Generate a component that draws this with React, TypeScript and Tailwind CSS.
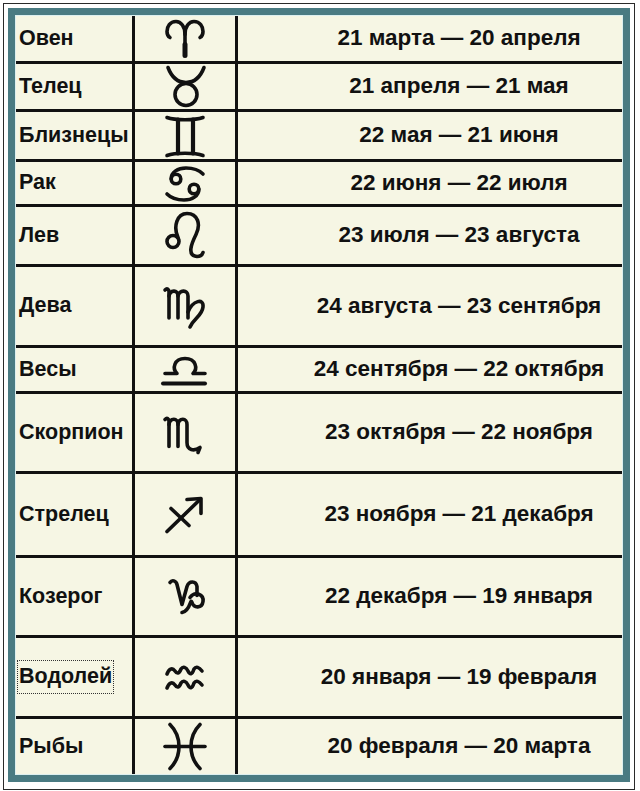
import React from "react";

type Row = { name: string; dates: string; c: number; sym: React.ReactNode; focus?: boolean };

const S = { fill: "none", stroke: "#111", strokeWidth: 3.6, strokeLinecap: "round" as const, strokeLinejoin: "round" as const };

const rows: Row[] = [
  {
    name: "Овен", dates: "21 марта — 20 апреля", c: 38.5,
    sym: (
      <>
        <path {...S} d="M185 55 L185 34 C185 26 181 21 176 21 C170 21 167 26 167 31 C167 34 168 36 170 37" />
        <path {...S} d="M185 34 C185 26 189 21 194 21 C200 21 203 26 203 31 C203 34 202 36 200 37" />
        <path {...S} strokeWidth={5} d="M185 44 L185 55" />
      </>
    ),
  },
  {
    name: "Телец", dates: "21 апреля — 21 мая", c: 86.5,
    sym: (
      <>
        <circle {...S} cx={186} cy={94} r={11} />
        <path {...S} d="M168 67 C171 75 177 82 186 82 C195 82 201 75 204 67" />
      </>
    ),
  },
  {
    name: "Близнецы", dates: "22 мая — 21 июня", c: 135.5,
    sym: (
      <>
        <path {...S} d="M167 117 C175 120 195 120 203 117" />
        <path {...S} d="M167 155 C175 152 195 152 203 155" />
        <path {...S} strokeWidth={4.2} d="M178 119 L178 153 M193 119 L193 153" />
      </>
    ),
  },
  {
    name: "Рак", dates: "22 июня — 22 июля", c: 183,
    sym: (
      <>
        <circle {...S} cx={176} cy={179} r={4.8} />
        <path {...S} d="M171.2 179 C171 172 178 168 186 168 C193 168 199 170 203 174" />
        <circle {...S} cx={194} cy={189} r={4.8} />
        <path {...S} d="M198.8 189 C199 196 192 200 184 200 C177 200 171 198 167 194" />
      </>
    ),
  },
  {
    name: "Лев", dates: "23 июля — 23 августа", c: 235.5,
    sym: (
      <>
        <circle {...S} cx={173} cy={241} r={6} />
        <path {...S} d="M178 237 C173 226 177 213 187 213 C198 213 201 224 196 234 C191 244 187 255 197 256 C200 256 202 255 203 252" />
      </>
    ),
  },
  {
    name: "Дева", dates: "24 августа — 23 сентября", c: 306,
    sym: (
      <>
        <path {...S} d="M165 290 C167 288 169 289 169 292 L169 318" />
        <path {...S} d="M169 296 C170 290 178 289 178 296 L178 318" />
        <path {...S} d="M178 296 C179 290 188 289 188 296 L188 318" />
        <path {...S} d="M188 312 C193 300 204 298 203 307 C202 316 194 318 190 327" />
      </>
    ),
  },
  {
    name: "Весы", dates: "24 сентября — 22 октября", c: 369.5,
    sym: (
      <>
        <path {...S} d="M165 373 L177 373 C172 368 174 358 185 358 C196 358 198 368 193 373 L205 373" />
        <path {...S} strokeWidth={4} d="M163 383 L205 383" />
      </>
    ),
  },
  {
    name: "Скорпион", dates: "23 октября — 22 ноября", c: 432.5,
    sym: (
      <>
        <path {...S} d="M165 419 C167 417 169 418 169 421 L169 446" />
        <path {...S} d="M169 424 C170 417 178 417 178 424 L178 446" />
        <path {...S} d="M178 424 C179 417 187 417 187 424 L187 442 C187 450 194 451 200 447 L198 452" />
      </>
    ),
  },
  {
    name: "Стрелец", dates: "23 ноября — 21 декабря", c: 514.5,
    sym: (
      <>
        <path {...S} d="M167 531 L200 499" />
        <path {...S} d="M187 499 L201 498 L201 513" />
        <path {...S} d="M171 508 L189 525" />
      </>
    ),
  },
  {
    name: "Козерог", dates: "22 декабря — 19 января", c: 596.5,
    sym: (
      <>
        <path {...S} d="M170 582 C172 579 176 580 177 584 L182 604 L187 586 C189 580 196 580 197 586 L197 595" />
        <path {...S} d="M190 597 C195 590 204 594 203 601 C202 608 194 608 192 602 C190 597 191 610 182 612" />
      </>
    ),
  },
  {
    name: "Водолей", dates: "20 января — 19 февраля", c: 677, focus: true,
    sym: (
      <>
        <path {...S} d="M167 674 C169 669 172 667 175 671 C177 674 179 674 181 669 C183 666 186 667 188 671 C190 675 192 675 194 669 C196 666 199 667 202 671" />
        <path {...S} d="M167 688 C169 683 172 681 175 685 C177 688 179 688 181 683 C183 680 186 681 188 685 C190 689 192 689 194 683 C196 680 199 681 202 685" />
      </>
    ),
  },
  {
    name: "Рыбы", dates: "20 февраля — 20 марта", c: 746.5,
    sym: (
      <>
        <path {...S} d="M170 724 C182 736 182 756 170 768" />
        <path {...S} d="M200 724 C188 736 188 756 200 768" />
        <path {...S} d="M165 746 L205 746" />
      </>
    ),
  },
];

export default function App() {
  return (
    <div className="w-[640px] h-[791px] bg-white pt-[3px] pl-[3px] overflow-hidden" style={{ fontFamily: '"Liberation Sans", Arial, sans-serif' }}>
      <div className="w-[632px] border border-[#2a2a2a] pt-[4px] pl-[4px] pr-[4px] pb-[7px] bg-white">
        <div className="border-[7px] border-[#4a7b82]">
          <div className="border border-[#dcefef]">
            <div className="grid grid-cols-[116px_100px_384px] grid-rows-[45px_45px_47px_42px_57px_78px_43px_77px_81px_77px_78px_55px] gap-[3px] bg-[#111]">
              {rows.map((r) => (
                <React.Fragment key={r.name}>
                  <div className="bg-[#f6f6e4] flex items-center pl-[3px] text-[21.5px] font-bold text-[#111] leading-none whitespace-nowrap">
                    {r.focus ? (
                      <span className="border border-dotted border-[#333] px-[1px] py-[5px] -ml-[2px]">{r.name}</span>
                    ) : (
                      <span>{r.name}</span>
                    )}
                  </div>
                  <div className="bg-[#f6f6e4] flex items-center justify-center">
                    <svg width={44} height={50} viewBox={`163 ${r.c - 25} 44 50`} className="overflow-visible shrink-0">
                      {r.sym}
                    </svg>
                  </div>
                  <div className="bg-[#f6f6e4] flex items-center justify-center pl-[58px] text-[22.5px] font-bold text-[#111] leading-none whitespace-nowrap">
                    {r.dates}
                  </div>
                </React.Fragment>
              ))}
            </div>
          </div>
        </div>
      </div>
    </div>
  );
}
